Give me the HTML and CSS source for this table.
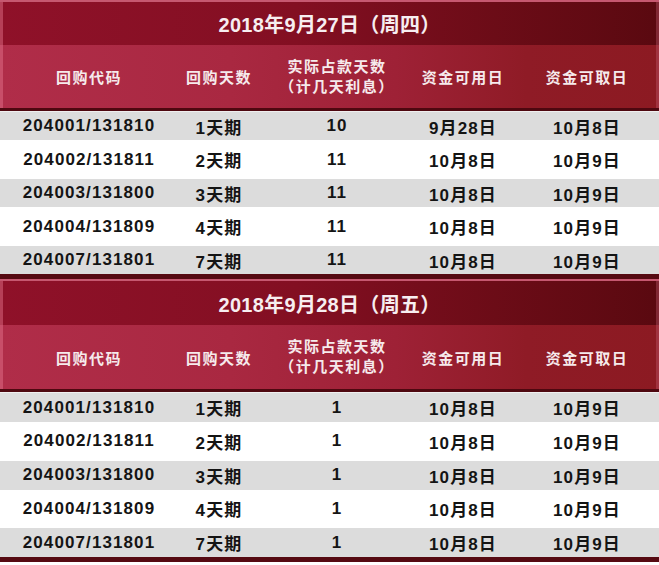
FILE: index.html
```html
<!DOCTYPE html>
<html lang="zh-CN">
<head>
<meta charset="utf-8">
<title>回购日历</title>
<link rel="stylesheet" href="styles.css">
</head>
<body>
<div class="page">
  <section class="sheet first">
    <div class="title">2018年9月27日（周四）</div>
    <div class="head grid">
      <div class="c">回购代码</div>
      <div class="c">回购天数</div>
      <div class="c two"><span>实际占款天数</span><span>（计几天利息）</span></div>
      <div class="c">资金可用日</div>
      <div class="c">资金可取日</div>
    </div>
    <div class="body">
      <div class="row g grid"><div class="c">204001/131810</div><div class="c">1天期</div><div class="c">10</div><div class="c">9月28日</div><div class="c">10月8日</div></div>
      <div class="row w grid"><div class="c">204002/131811</div><div class="c">2天期</div><div class="c">11</div><div class="c">10月8日</div><div class="c">10月9日</div></div>
      <div class="row g grid"><div class="c">204003/131800</div><div class="c">3天期</div><div class="c">11</div><div class="c">10月8日</div><div class="c">10月9日</div></div>
      <div class="row w grid"><div class="c">204004/131809</div><div class="c">4天期</div><div class="c">11</div><div class="c">10月8日</div><div class="c">10月9日</div></div>
      <div class="row g grid"><div class="c">204007/131801</div><div class="c">7天期</div><div class="c">11</div><div class="c">10月8日</div><div class="c">10月9日</div></div>
    </div>
  </section>
  <section class="sheet second">
    <div class="title">2018年9月28日（周五）</div>
    <div class="head grid">
      <div class="c">回购代码</div>
      <div class="c">回购天数</div>
      <div class="c two"><span>实际占款天数</span><span>（计几天利息）</span></div>
      <div class="c">资金可用日</div>
      <div class="c">资金可取日</div>
    </div>
    <div class="body">
      <div class="row g grid"><div class="c">204001/131810</div><div class="c">1天期</div><div class="c">1</div><div class="c">10月8日</div><div class="c">10月9日</div></div>
      <div class="row w grid"><div class="c">204002/131811</div><div class="c">2天期</div><div class="c">1</div><div class="c">10月8日</div><div class="c">10月9日</div></div>
      <div class="row g grid"><div class="c">204003/131800</div><div class="c">3天期</div><div class="c">1</div><div class="c">10月8日</div><div class="c">10月9日</div></div>
      <div class="row w grid"><div class="c">204004/131809</div><div class="c">4天期</div><div class="c">1</div><div class="c">10月8日</div><div class="c">10月9日</div></div>
      <div class="row g grid"><div class="c">204007/131801</div><div class="c">7天期</div><div class="c">1</div><div class="c">10月8日</div><div class="c">10月9日</div></div>
    </div>
  </section>
</div>
</body>
</html>
```

FILE: styles.css
```css
html, body {
  margin: 0;
  padding: 0;
  background: #ffffff;
}
body {
  font-family: "Liberation Sans", "Noto Sans CJK SC", sans-serif;
  font-weight: bold;
}
.page {
  width: 659px;
  height: 565px;
  overflow: hidden;
}
.sheet {
  border-bottom: 5px solid #560a12;
}
.title {
  height: 43px;
  border-top: 2px solid #c65870;
  background: linear-gradient(90deg, #8f1129 0%, #830f22 45%, #6c0c17 75%, #5a0910 100%);
  box-shadow: inset 3px 0 0 rgba(230, 120, 145, 0.45), inset -3px 0 0 rgba(200, 100, 120, 0.35);
  color: #f7eef0;
  font-size: 20px;
  display: flex;
  align-items: center;
  justify-content: center;
  letter-spacing: 0.3px;
}
.second .title {
  height: 44px;
}
.grid {
  display: grid;
  grid-template-columns: 172px 88px 148px 104px 144px;
  padding-left: 3px;
}
.c {
  display: flex;
  align-items: center;
  justify-content: center;
  white-space: nowrap;
}
.head {
  height: 63px;
  background: linear-gradient(90deg, #b02d49 0%, #a92841 35%, #9e2136 60%, #8f1b26 80%, #8c1a22 100%);
  box-shadow: inset 3px 0 0 rgba(230, 120, 145, 0.45), inset -3px 0 0 rgba(200, 100, 120, 0.35);
  border-bottom: 3px solid #4e0810;
  color: #f6eaec;
  font-size: 15px;
  letter-spacing: 1.5px;
}
.second .head {
  height: 64px;
}
.head .two {
  flex-direction: column;
  line-height: 20px;
}
.body {
  border-top: 1px solid #efefef;
  color: #141414;
  font-size: 17px;
  letter-spacing: 1.1px;
}
.row.g {
  height: 28px;
  background: #dcdcdc;
}
.row.w {
  height: 39px;
  background: #ffffff;
}
.second .row.g {
  height: 29px;
}
.second .row.w {
  height: 38.5px;
}
```
